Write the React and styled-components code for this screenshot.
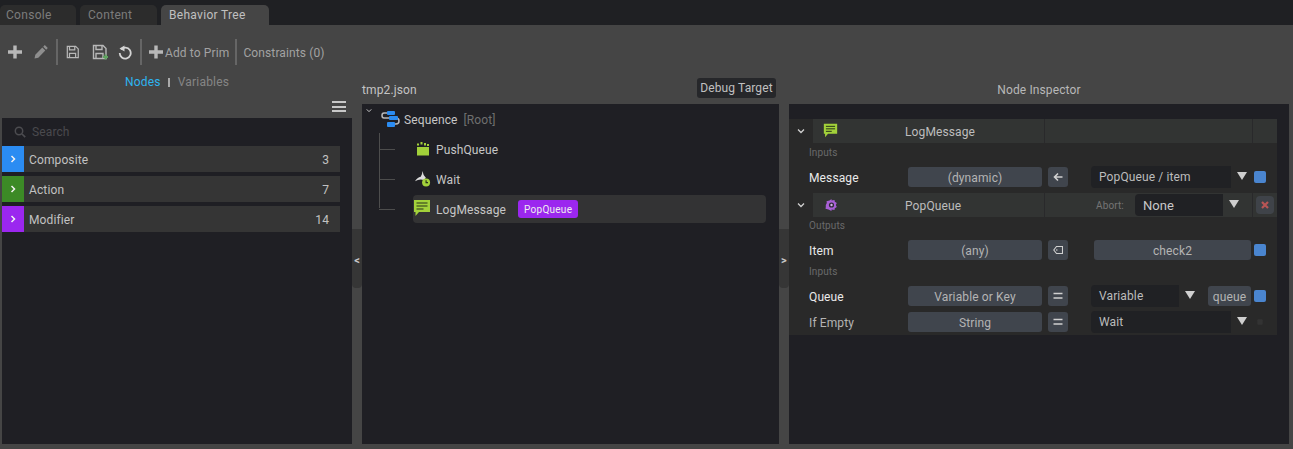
import React from "react";
import styled, { createGlobalStyle } from "styled-components";

const Global = createGlobalStyle`
  html, body { margin: 0; padding: 0; background: #454545; }
  body { width: 1293px; height: 449px; overflow: hidden; font-family: Roboto, "Liberation Sans", sans-serif; font-size: 12px; color: #c4c4c4; letter-spacing: .12px; }
  * { box-sizing: border-box; }
`;

const Page = styled.div`width: 1293px; height: 449px; display: flex; flex-direction: column;`;
const TabBar = styled.div`height: 25px; background: #1f2023; display: flex; align-items: flex-end; gap: 4px;`;
const Tab = styled.div`
  width: ${p => p.$w}px; height: 20px; padding-left: ${p => p.$pad}px; border-radius: 5px 5px 0 0;
  background: ${p => p.$active ? "#454545" : "#2c2c2c"}; color: ${p => p.$active ? "#c0c0c0" : "#7c7c7c"};
  line-height: 21px; letter-spacing: .3px;
`;
const Toolbar = styled.div`height: 47px; display: flex; align-items: center; padding: 7px 0 0 8px;`;
const ToolIcon = styled.svg`width: ${p => p.$w || 14}px; height: 16px; margin-right: ${p => p.$mr || 0}px; flex: none;`;
const Sep = styled.div`width: 2px; height: 26px; background: #666; margin: 0 ${p => p.$r}px 0 ${p => p.$l}px;`;
const ToolText = styled.span`color: #a2a2a2; padding-top: 2px;`;
const Main = styled.div`flex: 1; display: flex; padding: 0 4px 5px 2px; min-height: 0;`;
const Column = styled.div`width: ${p => p.$w}px; display: flex; flex-direction: column; flex: none;`;
const LeftHead = styled.div`height: 46px; display: flex; flex-direction: column;`;
const NodeTabs = styled.div`height: 20px; padding-left: 123px; display: flex; align-items: center;`;
const NodeTab = styled.span`color: ${p => p.$on ? "#2eb4f0" : "#858585"}; letter-spacing: .2px;`;
const Bar = styled.span`width: 2px; height: 9px; background: #aaa; margin: 0 8px 0 7px;`;
const Burger = styled.div`
  align-self: flex-end; width: 14px; height: 11px; margin: 9px 6px 0 0;
  border-top: 2px solid #c8c8c8; border-bottom: 2px solid #c8c8c8; display: flex; align-items: center;
  &::before { content: ""; width: 100%; height: 2px; background: #c8c8c8; }
`;
const Panel = styled.div`flex: 1; background: #1f1f24; min-height: 0;`;
const Search = styled.div`height: 28px; display: flex; align-items: center; padding-left: 12px; gap: 6px; color: #4a4a4e;`;
const CatRow = styled.div`
  width: 338px; height: 26px; margin-bottom: 4px; background: #353535; display: flex; align-items: center;
  color: #c2c2c2; padding-right: 11px;
`;
const CatMark = styled.div`width: 22px; height: 26px; background: ${p => p.$c}; display: flex; align-items: center; justify-content: center; margin-right: 5px;`;
const CatName = styled.span`flex: 1; padding-top: 2px;`;
const CatCount = styled.span`padding-top: 2px;`;
const Splitter = styled.div`width: 10px; flex: none; padding-top: 157px;`;
const Handle = styled.div`
  height: 59px; background: #363636; border-radius: 0 0 4px 4px; color: #c8c8c8; font-size: 11px; font-weight: 700;
  display: flex; align-items: center; justify-content: center; padding-top: 4px;
`;
const MidHead = styled.div`height: 32px; display: flex; align-items: center; justify-content: space-between; padding: 4px 3px 0 0;`;
const FileName = styled.span`color: #c4c4c4;`;
const DebugBtn = styled.div`height: 20px; width: 79px; background: #26272a; border-radius: 3px; color: #c0c0c0; display: flex; align-items: center; justify-content: center; margin-top: -5px;`;
const TreeRow = styled.div`
  height: ${p => p.$h || 30}px; display: flex; align-items: center; position: relative; color: #c6c6c6;
`;
const RowText = styled.span`padding-top: 2px; color: ${p => p.$dim ? "#6f6f6f" : "inherit"}; margin-left: ${p => p.$ml || 0}px;`;
const Caret = styled.svg`width: 6px; height: 5px; margin: -18px 11px 0 4px; flex: none;`;
const Children = styled.div`margin-left: 17px; position: relative; display: flex; flex-direction: column;`;
const Rail = styled.div`
  position: absolute; left: 0; top: -1px; bottom: 16px; width: 1px; background: #4d4d4d;
`;
const Child = styled.div`
  height: 30px; display: flex; align-items: center; padding-left: 34px; position: relative;
  &::before { content: ""; position: absolute; left: 0; top: 15px; width: 16px; height: 1px; background: #4d4d4d; }
`;
const ChildBody = styled.div`
  width: 353px; height: 28px; display: flex; align-items: center; border-radius: 4px; color: #c6c6c6;
  background: ${p => p.$sel ? "#333334" : "transparent"}; padding-left: ${p => p.$pad}px;
`;
const Badge = styled.span`height: 18px; background: #9b27ef; border-radius: 3px; color: #eee; font-size: 10px; display: flex; align-items: center; padding: 0 6px; margin-left: 12px; letter-spacing: .25px;`;
const RightHead = styled.div`height: 32px; display: flex; align-items: center; justify-content: center; padding: 4px 0 0 0; color: #b8b8b8;`;
const InspectorTop = styled.div`height: 15px;`;
const Inspector = styled.div`width: 488px; background: #292929; display: flex; flex-direction: column;`;
const NodeHead = styled.div`height: 24px; display: flex; align-items: center;`;
const Fold = styled.svg`width: 8px; height: 6px; margin: 0 8px; flex: none;`;
const HeadBar = styled.div`flex: 1; height: 24px; background: #323433; display: flex; align-items: center; position: relative;`;
const HeadIcon = styled.div`width: 92px; padding-left: ${p => p.$p}px; display: flex; align-items: center; flex: none;`;
const HeadTitle = styled.div`width: 139px; color: #bdbdbd; flex: none; padding-top: 2px;`;
const HeadMid = styled.div`
  width: 209px; height: 24px; border-left: 1px solid #29292b; border-right: 1px solid #29292b; flex: none;
  display: flex; align-items: center; padding-left: 51px; color: #757575; font-size: 10px;
`;
const HeadEnd = styled.div`flex: 1; display: flex; align-items: center; justify-content: center;`;
const Combo = styled.div`
  width: ${p => p.$w}px; height: 22px; background: #202124; border-radius: 4px 0 0 4px; margin-left: ${p => p.$ml || 0}px;
  color: ${p => p.$c || "#bcbcbc"}; font-size: ${p => p.$fs || 12}px; display: flex; align-items: center; padding-left: 8px; flex: none;
`;
const Arrow = styled.div`
  width: 0; height: 0; border-left: 5px solid transparent; border-right: 5px solid transparent; border-top: 8px solid #cfcfcf;
  margin: -2px ${p => p.$r}px 0 ${p => p.$l}px; flex: none;
`;
const Close = styled.div`width: 18px; height: 18px; background: #3f4349; border-radius: 4px; color: #c45a5a; display: flex; align-items: center; justify-content: center;`;
const GroupLabel = styled.div`height: ${p => p.$h}px; padding: ${p => p.$pt}px 0 0 20px; color: #69696b; font-size: 10px; line-height: 12px;`;
const Row = styled.div`height: ${p => p.$h || 26}px; display: flex; align-items: center; padding-left: 20px; margin-bottom: ${p => p.$mb || 0}px;`;
const Label = styled.div`width: 99px; color: ${p => p.$b ? "#eaeaea" : "#b4b4b4"}; flex: none; padding-top: 2px;`;
const TypeBtn = styled.div`
  width: ${p => p.$w || 134}px; height: 20px; background: #40454d; border-radius: 3px; color: #b4b4b4; flex: none; margin-left: ${p => p.$ml || 0}px;
  display: flex; align-items: center; justify-content: center; padding-top: 2px;
`;
const OpBtn = styled.div`width: 20px; height: 20px; margin: 0 ${p => p.$r}px 0 6px; background: #40454d; border-radius: 3px; flex: none; display: flex; align-items: center; justify-content: center;`;
const Dot = styled.div`width: 12px; height: 12px; background: ${p => p.$off ? "#333" : "#4a85cf"}; border-radius: 2px; flex: none; transform: ${p => p.$off ? "scale(.45)" : "none"};`;

const Plus = ({ mr }) => <ToolIcon $mr={mr} viewBox="0 0 14 16"><path d="M5.3 1.5h3.4v4.8H14v3.4H8.7v4.8H5.3V9.700H0V6.300h5.300z" fill="#b8b8b8" /></ToolIcon>;
const SaveIcon = ({ mr, add }) => (
  <ToolIcon $w={add ? 16 : 14} $mr={mr} viewBox="0 0 16 16">
    <path d="M1.500 1.500h9.500l3 3v10h-12.500z M4 1.500v4h6v-4 M4 14.500v-5h7v5" fill="none" stroke="#b8b8b8" strokeWidth="1.400" />
    {add && <path d="M11 13h5M13.500 10.500v5" stroke="#5fa45f" strokeWidth="2" />}
  </ToolIcon>
);
const Chevron = () => <svg width="6" height="8" viewBox="0 0 6 8"><path d="M1.500 1l3 3-3 3" fill="none" stroke="#f2f2f2" strokeWidth="1.500" /></svg>;
const Down = () => <path d="M1 1.500l3 3 3-3" fill="none" stroke="#d0d0d0" strokeWidth="1.300" />;
const Chat = ({ s, t }) => (
  <svg width={s} height={s} viewBox="0 0 18 18" style={{ flex: "none", marginTop: t }}>
    <path d="M1 1h16v12H6l-3.500 4v-4H1z" fill="#a2d13a" />
    <path d="M3.500 4h11M3.500 7h11M3.500 10h7" stroke="#26331a" strokeWidth="1.200" />
  </svg>
);

export default function App() {
  return (
    <Page>
      <Global />
      <TabBar>
        <Tab $w={76} $pad={6}>Console</Tab>
        <Tab $w={77} $pad={8}>Content</Tab>
        <Tab $w={108} $pad={8} $active>Behavior Tree</Tab>
      </TabBar>
      <Toolbar>
        <Plus mr={12} />
        <ToolIcon $mr={8} viewBox="0 0 14 16"><path d="M10.800 1l3 3-1.600 1.700-3-3zM8.300 3.600l3 3-7 7.200-3.800.8.800-3.800z" fill="#8e8e8e" /></ToolIcon>
        <Sep $l={0} $r={8} />
        <SaveIcon mr={12} />
        <SaveIcon add mr={10} />
        <ToolIcon viewBox="0 0 14 16"><path d="M3 5.500A5.500 5.500 0 1 1 1.700 9" fill="none" stroke="#d4d4d4" strokeWidth="1.800" /><path d="M6.500 1.500v6l-5-3z" fill="#d4d4d4" /></ToolIcon>
        <Sep $l={8} $r={7} />
        <Plus mr={2} />
        <ToolText>Add to Prim</ToolText>
        <Sep $l={6} $r={6} />
        <ToolText>Constraints (0)</ToolText>
      </Toolbar>
      <Main>
        <Column $w={350}>
          <LeftHead>
            <NodeTabs><NodeTab $on>Nodes</NodeTab><Bar /><NodeTab>Variables</NodeTab></NodeTabs>
            <Burger />
          </LeftHead>
          <Panel>
            <Search>
              <svg width="12" height="12" viewBox="0 0 12 12"><circle cx="5" cy="5" r="3.700" fill="none" stroke="#4c4c50" strokeWidth="1.500" /><path d="M8 8l3.200 3.200" stroke="#4c4c50" strokeWidth="1.700" /></svg>
              <span>Search</span>
            </Search>
            <CatRow><CatMark $c="#2b8cf2"><Chevron /></CatMark><CatName>Composite</CatName><CatCount>3</CatCount></CatRow>
            <CatRow><CatMark $c="#3c8a26"><Chevron /></CatMark><CatName>Action</CatName><CatCount>7</CatCount></CatRow>
            <CatRow><CatMark $c="#9b27ef"><Chevron /></CatMark><CatName>Modifier</CatName><CatCount>14</CatCount></CatRow>
          </Panel>
        </Column>
        <Splitter><Handle>&lt;</Handle></Splitter>
        <Column $w={417}>
          <MidHead><FileName>tmp2.json</FileName><DebugBtn>Debug Target</DebugBtn></MidHead>
          <Panel>
            <TreeRow $h={30}>
              <Caret viewBox="0 0 8 6"><Down /></Caret>
              <svg width="20" height="19" viewBox="0 0 20 19" style={{ flex: "none", marginRight: 3, marginLeft: -2 }}>
                <path d="M13 3H3Q1 3 1 5.500T3 8h12q3 0 3 3t-3 3h-2" fill="none" stroke="#b8b8b8" strokeWidth="1.500" />
                <rect x="6" y="1" width="8" height="4" rx="1" fill="#2b8cf2" /><rect x="8" y="6" width="9" height="4" rx="1" fill="#2b8cf2" /><rect x="6" y="12" width="8" height="5" rx="1" fill="#2b8cf2" />
              </svg>
              <RowText>Sequence</RowText>
              <RowText $dim $ml={6}>[Root]</RowText>
            </TreeRow>
            <Children>
              <Rail />
              <Child><ChildBody $pad={3}>
                <svg width="14" height="14" viewBox="0 0 14 14" style={{ marginRight: 6, flex: "none" }}><path d="M1 5h12v8.500H1zM1 1.500h2v2H1zM4.500 0h2v2.500h-2zM8 1h2v2.500H8zM11 2h2v2h-2z" fill="#a2d13a" /></svg>
                <RowText>PushQueue</RowText>
              </ChildBody></Child>
              <Child><ChildBody $pad={2}>
                <svg width="16" height="16" viewBox="0 0 14 14" style={{ marginRight: 5, flex: "none" }}><path d="M6.500 0q.5 3.500 3 6L8 8Q4 6.500 0 9q2-3.500 5-4Q6.500 3 6.500 0z" fill="#dcdcdc" /><circle cx="9.700" cy="10" r="3.500" fill="#a2d13a" /><path d="M9.700 8v2.200h1.700" stroke="#26331a" fill="none" /></svg>
                <RowText>Wait</RowText>
              </ChildBody></Child>
              <Child><ChildBody $sel>
                <Chat s={18} t={-3} />
                <RowText $ml={5}>LogMessage</RowText>
                <Badge>PopQueue</Badge>
              </ChildBody></Child>
            </Children>
          </Panel>
        </Column>
        <Splitter><Handle>&gt;</Handle></Splitter>
        <Column $w={500}>
          <RightHead>Node Inspector</RightHead>
          <Panel>
            <InspectorTop />
            <Inspector>
              <NodeHead>
                <Fold viewBox="0 0 8 6"><Down /></Fold>
                <HeadBar>
                  <HeadIcon $p={10}><Chat s={15} t={-2} /></HeadIcon>
                  <HeadTitle>LogMessage</HeadTitle>
                  <HeadMid />
                </HeadBar>
              </NodeHead>
              <GroupLabel $h={23} $pt={4}>Inputs</GroupLabel>
              <Row $h={22} $mb={5}>
                <Label $b>Message</Label>
                <TypeBtn>(dynamic)</TypeBtn>
                <OpBtn $r={23}><svg width="10" height="10" viewBox="0 0 10 10"><path d="M9.500 5H2M5 1.500L1.500 5 5 8.500" fill="none" stroke="#d0d0d0" strokeWidth="1.600" /></svg></OpBtn>
                <Combo $w={140}>PopQueue / item</Combo>
                <Arrow $l={6} $r={7} />
                <Dot />
              </Row>
              <NodeHead>
                <Fold viewBox="0 0 8 6"><Down /></Fold>
                <HeadBar>
                  <HeadIcon $p={12}>
                    <svg width="13" height="14" viewBox="0 0 13 14"><path d="M6.500 1v1.500l3-.5.300 1.700 2 1.300-1 2 1 2-2 1.300-.3 1.700-3-.5V13l-3-1.500-3-.7.300-1.800L.8 7l1-2-.3-1.800 3-.7z" fill="#a85fd6" /><circle cx="6.500" cy="7" r="2.600" fill="#2f2c38" /><circle cx="6.500" cy="7" r="1.200" fill="#d8b0ee" /></svg>
                  </HeadIcon>
                  <HeadTitle>PopQueue</HeadTitle>
                  <HeadMid>
                    <span>Abort:</span>
                    <Combo $w={88} $ml={11} $c="#c8c8c8" $fs={13}>None</Combo>
                    <Arrow $l={6} $r={0} />
                  </HeadMid>
                  <HeadEnd><Close>
                    <svg width="8" height="8" viewBox="0 0 8 8"><path d="M1 1l6 6M7 1L1 7" stroke="#b85555" strokeWidth="2.200" /></svg>
                  </Close></HeadEnd>
                </HeadBar>
              </NodeHead>
              <GroupLabel $h={23} $pt={3}>Outputs</GroupLabel>
              <Row $h={20}>
                <Label $b>Item</Label>
                <TypeBtn>(any)</TypeBtn>
                <OpBtn $r={26}><svg width="10" height="10" viewBox="0 0 10 10"><path d="M9.500 1.500H3.500L.8 5l2.700 3.500h6z" fill="none" stroke="#d0d0d0" strokeWidth="1.100" /><circle cx="3.800" cy="5" r=".8" fill="#d0d0d0" /></svg></OpBtn>
                <TypeBtn $w={157}>check2</TypeBtn>
                <span style={{ width: 3 }} />
                <Dot />
              </Row>
              <GroupLabel $h={26} $pt={6}>Inputs</GroupLabel>
              <Row $h={20} $mb={6}>
                <Label $b>Queue</Label>
                <TypeBtn>Variable or Key</TypeBtn>
                <OpBtn $r={23}><svg width="10" height="8" viewBox="0 0 10 8"><path d="M.5 1.500h9M.5 6h9" stroke="#d0d0d0" strokeWidth="1.500" /></svg></OpBtn>
                <Combo $w={88}>Variable</Combo>
                <Arrow $l={6} $r={13} />
                <TypeBtn $w={43}>queue</TypeBtn>
                <span style={{ width: 3 }} />
                <Dot />
              </Row>
              <Row $h={20} $mb={3}>
                <Label>If Empty</Label>
                <TypeBtn>String</TypeBtn>
                <OpBtn $r={23}><svg width="10" height="8" viewBox="0 0 10 8"><path d="M.5 1.500h9M.5 6h9" stroke="#d0d0d0" strokeWidth="1.500" /></svg></OpBtn>
                <Combo $w={140}>Wait</Combo>
                <Arrow $l={6} $r={7} />
                <Dot $off />
              </Row>
            </Inspector>
          </Panel>
        </Column>
      </Main>
    </Page>
  );
}
